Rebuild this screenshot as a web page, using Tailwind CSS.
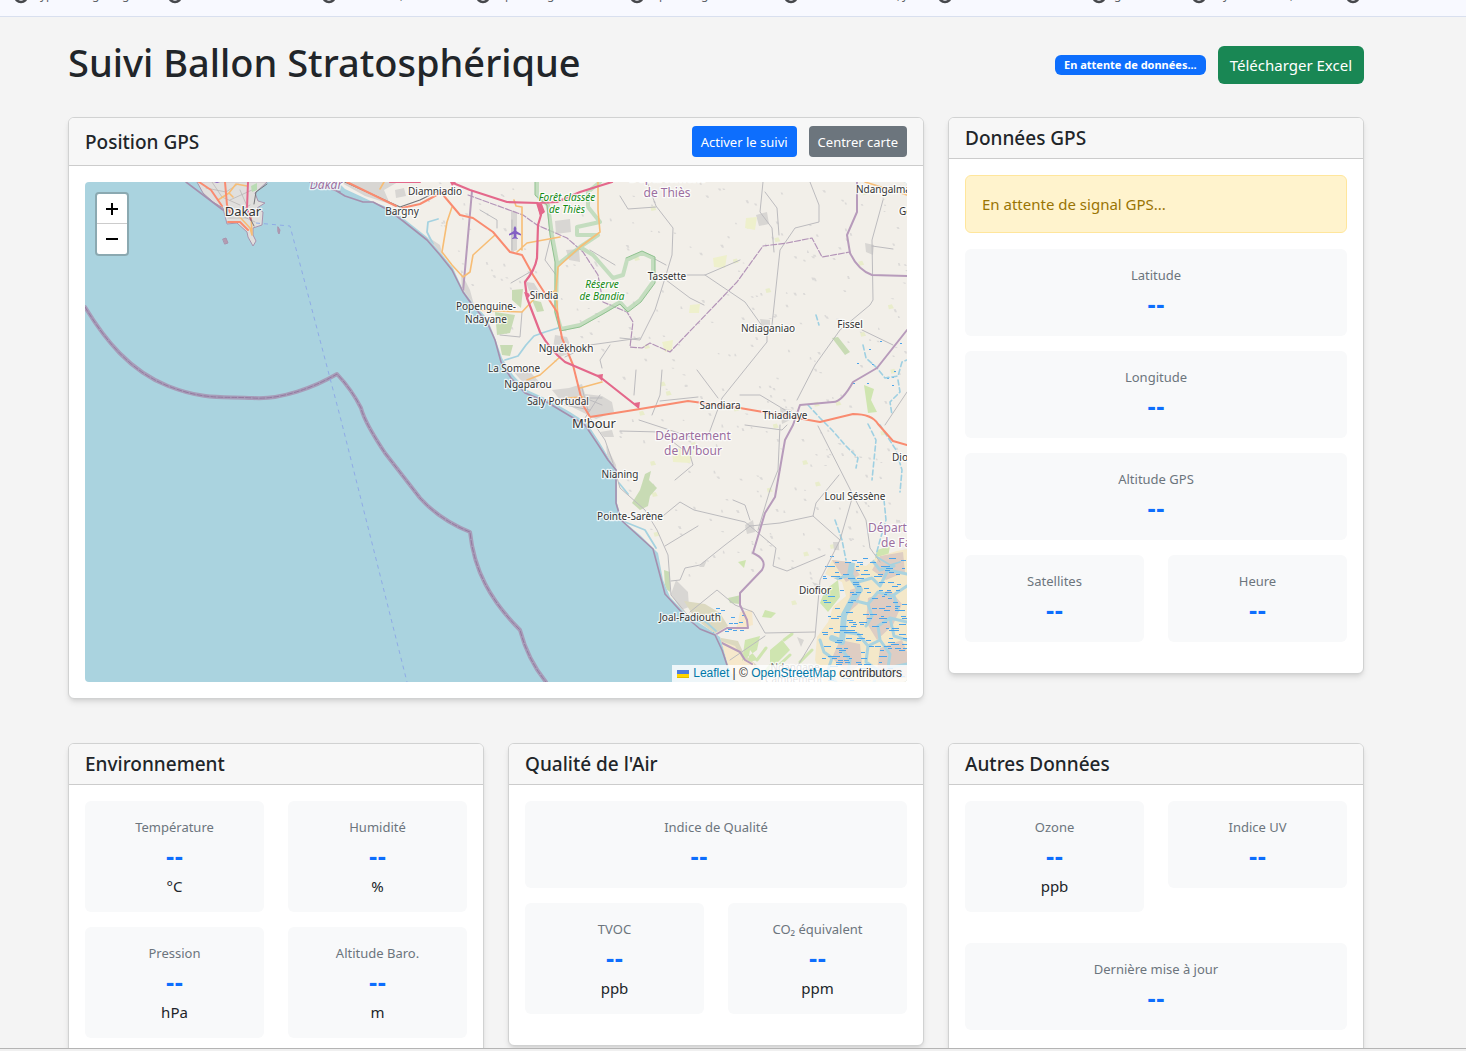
<!DOCTYPE html>
<html lang="fr">
<head>
<meta charset="utf-8">
<meta name="viewport" content="width=device-width, initial-scale=1">
<title>Suivi Ballon Stratosphérique</title>
<script src="https://cdn.jsdelivr.net/npm/@tailwindcss/browser@4"></script>
</head>
<body class="flex h-screen flex-col overflow-hidden bg-[#f4f4f4] font-['Noto_Sans',sans-serif] text-[15px] leading-6 text-[#212529]">

<!-- Bookmarks bar, scrolled almost out of view -->
<div class="flex h-[17px] shrink-0 items-start overflow-hidden border-b border-[#d9e0ef] bg-[#f8f9ff] pl-[13px]" aria-hidden="true">
  <svg class="h-4 w-full" fill="none" stroke="#46484c" stroke-width="2.500">
    <g>
      <circle cx="8" cy="-4" r="6"/><circle cx="162" cy="-4" r="6"/><circle cx="316" cy="-4" r="6"/><circle cx="470" cy="-4" r="6"/><circle cx="624" cy="-4" r="6"/><circle cx="778" cy="-4" r="6"/><circle cx="932" cy="-4" r="6"/><circle cx="1086" cy="-4" r="6"/><circle cx="1186" cy="-4" r="6"/><circle cx="1340" cy="-4" r="6"/>
    </g>
    <g fill="#5f6368" stroke="none" font-size="12">
      <text x="27" y="-1">yp</text><text x="79" y="-1">g</text><text x="109" y="-1">g</text><text x="387" y="-1">,</text><text x="492" y="-1">p</text><text x="534" y="-1">g</text><text x="646" y="-1">p</text><text x="688" y="-1">g</text><text x="884" y="-1">,</text><text x="889" y="-1">y</text><text x="1101" y="-1">g</text><text x="1210" y="-1">y</text><text x="1277" y="-1">,</text>
    </g>
  </svg>
</div>

<div class="min-h-0 flex-1 overflow-hidden pr-[34px]">
<main class="mx-auto max-w-[1320px] px-3">
  <header class="flex items-center justify-between pt-6">
    <h1 class="pb-1.5 text-[38px] leading-[42px] font-medium">Suivi Ballon Stratosphérique</h1>
    <div class="flex items-center gap-3">
      <span class="rounded-md bg-[#0d6efd] px-[9px] text-[11px] leading-5 font-bold text-white">En attente de données...</span>
      <button type="button" class="h-[38px] rounded-md bg-[#198754] px-3 text-[15px] text-white">Télécharger Excel</button>
    </div>
  </header>

  <div class="mt-7 grid grid-cols-3 items-start gap-6">
    <section class="col-span-2 overflow-hidden rounded-md border border-[#d1d2d2] bg-white shadow-md">
      <div class="flex items-center justify-between border-b border-[#cccccc] bg-[#f7f7f7] px-4 py-2">
        <h2 class="text-[19px] leading-6 font-medium">Position GPS</h2>
        <div class="flex gap-3">
          <button type="button" class="h-[31px] rounded bg-[#0d6efd] px-[9px] text-[13px] text-white">Activer le suivi</button>
          <button type="button" class="h-[31px] rounded bg-[#6c757d] px-[9px] text-[13px] text-white">Centrer carte</button>
        </div>
      </div>
      <div class="p-4">
        <div class="relative h-[500px] overflow-hidden rounded bg-[#aad3df]">
          <svg class="h-full w-full" viewBox="85 182 822 500" preserveAspectRatio="xMidYMid slice" fill="none" stroke-linejoin="round" stroke-linecap="round" role="img" aria-label="Carte de la région de Dakar et M'bour">
            <defs>
              <clipPath id="land"><path d="M338 182 345 189 373 202 390 208 403 218 427 237 440 252 453 268 463 290 473 303 487 318 495 338 502 358 513 375 527 390 547 399 570 412 587 423 600 443 610 460 617 470 617 503 622 520 640 535 658 553 663 580 670 597 687 615 710 630 720 637 723 647 728 665 735 682 907 682 907 182Z"/></clipPath>
              <clipPath id="delta"><path d="M877 557 897 551 907 549V682H823L815 660 817 637 828 622 833 607 846 596 842 582 825 574 832 560 850 562 866 566Z"/></clipPath>
            </defs>
            <!-- Cap-Vert peninsula and islets -->
            <path fill="#e0dfdd" stroke="#a893ad" d="M197 182 203 193 213 202 223 208 227 224 237 223 247 232 248 237 253 246 256 241 253 235 253 228 262 225 263 212 257 208 265 203 258 201 255 193 267 182Z"/>
            <path fill="#b59bb0" stroke="#a893ad" d="M223 239 226 238 228 243 225 244ZM278 227 280 230 279 234 278 232Z"/>
            <path stroke="#b4b2b0" stroke-width=".7" d="M212 182 222 197 240 205M206 188 226 192 238 184M235 214 250 205M230 200 252 190M240 215 255 222M228 211 256 211M228 218 248 218M240 190 247 206"/>
            <!-- Mainland -->
            <g clip-path="url(#land)">
              <path fill="#f2efe9" d="M300 182H907V682H300Z"/>
              <g id="texture"></g>
              <path fill="#d8d6d3" d="M340 182H398L384 190 390 204 365 196ZM395 190 404 188 406 196 396 198ZM511 210 517 212 517 250 511 252ZM555 221 570 219 571 232 556 234ZM526 282 534 283 542 296 531 296ZM555 335 567 337 573 352 560 357 553 348ZM569 388 582 384 585 394 602 396 612 402 614 412 596 419 584 413 562 402 552 390ZM510 368 530 372 545 388 528 388ZM600 432 612 430 614 437 604 437ZM606 445 616 465 617 476 608 462ZM676 580 688 592 689 607 681 610 671 594ZM756 215 767 212 769 224 759 226ZM760 319 770 320 770 328 762 328ZM745 525 753 520 755 532 747 534ZM833 542 839 542 839 550 834 550ZM703 562 707 560 704 567 699 567ZM812 582 821 585 819 592ZM797 637 804 640 801 647ZM428 237 440 245 444 260 455 272 450 270 437 256ZM461 272 470 290 474 305 462 293ZM566 250 579 249 580 262 569 260ZM865 243 874 245 873 255 866 252ZM780 408 792 410 790 420 782 424Z"/>
              <path fill="#c8dbb4" d="M512 290 523 289 521 308 512 300ZM532 300 541 302 544 311 537 312ZM495 312 515 315 510 333 497 335ZM500 345 513 345 510 356 502 355ZM645 474 651 471 649 480 657 488 650 496 648 506 640 510 632 503 640 490ZM832 338 838 337 850 352 845 355ZM664 570 670 572 670 592 665 588ZM728 598 741 595 740 604 730 603Z"/>
              <path fill="#eef0cc" d="M746 218 757 217 755 230 745 228ZM713 258 727 255 725 268 714 267ZM690 305 700 304 699 313 689 313ZM662 342 673 340 672 350 665 352ZM672 448 694 450 690 463 673 462Z"/>
              <path fill="#dcd9c0" d="M684 601 705 604 720 613 728 626 714 634 694 617ZM716 637 738 641 744 654 760 668 761 682H730Z"/>
              <path fill="#f6e8cc" d="M718 640 735 646 742 658 754 663V674H732ZM740 612 752 610 753 625 736 630Z"/>
              <path fill="#cfe5b0" d="M745 640 760 636 757 650 742 661ZM770 650 782 640 790 650 770 670ZM825 590 838 580 840 597 828 612 820 603ZM738 562 746 560 744 568ZM765 610 776 613 771 618 762 617ZM750 650 748 662 758 660ZM864 385 874 389 871 400 877 412 868 413ZM877 550 890 546 887 563 873 567Z"/>
              <path stroke="#cfe5b0" stroke-width="3" d="M757 660 766 648M776 668 790 655M762 676 770 666M784 640 792 634M800 662 812 650"/>
              <!-- Saloum delta -->
              <g clip-path="url(#delta)">
                <path fill="#f4e8c9" d="M810 540H907V682H810Z"/>
                <path fill="#decdc3" d="M830 557 850 562 860 575 846 582ZM880 556 903 552 905 572 886 580 872 570ZM868 598 890 590 902 604 893 625 877 640 866 622ZM840 640 860 644 862 664 848 673 832 658ZM880 648 902 640 907 652V678H876ZM850 590 862 586 858 604 849 612Z"/>
                <g stroke="#aad3df"><path stroke-width="6" d="M853 558 850 575 860 590 852 600 844 615 842 642 832 638"/><path stroke-width="3" d="M850 575 833 580M852 600 868 604 878 592 892 596 907 586M842 632 858 634 868 646 880 640 878 626 890 618 907 622M858 582 872 578 880 586 888 570 907 574M872 560 880 570 894 566M820 640 824 652 832 658 828 670 836 682M868 646 866 662 878 670 874 682M890 618 894 636 907 640M842 650 850 660 848 674M880 640 890 654 888 668 907 664M868 604 872 616 866 626M894 596 898 610"/></g>
              </g>
              <g id="swamp"></g>
              <!-- Intermittent streams -->
              <path stroke="#9fd0e2" stroke-width="1.6" stroke-dasharray="5 3" d="M863 345 866 358 877 368 885 378 898 376 902 362 907 360M898 380 900 392 890 402 892 415M808 405 820 418 832 430 845 445 858 458 856 468M868 424 876 440 874 460 872 480M880 425 896 450 902 470 900 492M835 520 842 540 846 560M884 500 886 520 880 540 876 555M816 315 819 325"/>
              <path stroke="#a5d2e0" stroke-width="1.8" d="M438 219 428 222 427 232 433 244M505 360 518 356 526 345 534 336 545 332 558 328M619 483 628 494M625 522 645 530 656 548M690 616 706 622 716 631M877 557 890 565 900 562"/>
              <!-- Local roads -->
              <path stroke="#bcbbbe" stroke-width="1" d="M647 182 656 206 673 228 672 255 666 275 655 310 640 340 620 338M656 207 628 209 620 196M666 265 653 258M666 280 690 298 704 305M687 275 705 275 740 260M705 275 745 302 765 330M810 182 819 205V222L795 228 780 250 772 325 767 330V342L722 398 708 436M763 182 760 212 772 228 774 252M765 192 777 208 779 235M883 200 872 240 873 300 870 305 840 330 815 365 797 400M872 246 893 249M718 398 697 370M698 397 660 401M740 395 760 395 785 410M662 370 660 395 652 415M639 420 700 440M620 431 660 432 690 455 693 465 675 480M745 425 782 430 787 425M590 418 605 440 612 460 620 488 645 510 657 530 668 555 671 595 690 618M658 520 680 502 694 510 745 522 750 526 780 523 813 516M750 526 725 545 700 565 685 568 680 580 671 581M818 426 853 495 840 540 820 580 815 637 788 682M853 495 866 520 870 548 880 562M840 540 813 516 816 503 839 475M750 526 776 548 773 566 787 571 825 555M665 546 698 526M690 612 717 590 735 605 753 612 765 633 815 632M765 636 730 660M585 398 602 405M565 405 590 410M571 398 602 398M582 388 590 418M600 395 585 418M565 357 590 345 640 338M610 345 600 360 602 368M636 370 634 395M500 335 520 337 522 312M550 240 545 260 556 275M512 220V250M480 210 497 220 497 228M511 283 530 272M590 250 615 265M780 425 778 470 770 490 758 530M733 500 745 505 750 520M862 330 893 345M907 392 885 425"/>
              <path stroke="#77767a" stroke-width="1.3" d="M345 182 400 207 420 200 440 190"/>
              <!-- Administrative limits -->
              <path stroke="#b79bbb" stroke-width="2" d="M472 191 463 292M857 182V212L847 235 850 253Q858 270 872 275L907 276M907 330 877 368 853 382Q842 402 833 402L800 405 793 425 785 440 775 497 765 513 753 553Q768 560 762 570L740 593V605L747 620 748 628 727 628 715 635M716 640 740 652 745 660 752 664"/>
              <path stroke="#b394b8" stroke-width="1.2" stroke-dasharray="6 2" d="M468 195 523 215 537 225 567 238 583 252 598 275 603 302 627 312 633 322 630 347 642 348 650 343 670 352 737 282 763 246 787 243 812 238 822 257 850 252"/>
              <!-- Nature reserves -->
              <path stroke="#b8d8b4" stroke-width="4" stroke-opacity=".8" d="M537 182V195L548 205 552 235 557 262 556 312 561 329 580 325 603 312 620 302 627 310 640 300 653 282V258L642 253 627 260 623 275 613 278 593 255 580 247M598 235 577 235V227L600 222 588 207V192L600 182M598 235 580 247 557 265"/>
              <path stroke="#8fc18f" d="M535 182V195L547 205 550 235 555 262V312L560 331 580 327 603 314 620 304 628 312 641 302 655 283V257L642 251 626 258"/>
              <!-- Secondary and primary roads -->
              <path stroke="#f7bd75" stroke-width="1.6" d="M452 207 447 222 442 252 452 265 463 277 470 272 473 255 495 235M514 200 516 206 522 207V250M517 252 527 243 560 237M598 182V210L600 232 580 247 558 267 556 290 558 318M473 310 522 312 535 298 555 291M527 380 540 375 560 357M580 388 602 382M566 398 583 397M865 182 907 195M384 182 380 189"/>
              <path stroke="#f98b70" stroke-width="2" d="M347 182 396 206M402 208 420 204 446 190M444 196 460 215 473 218 493 232 510 252 522 255 533 275 557 312 562 338 573 365 583 405 590 417 640 409 688 401 740 408 763 412 820 422 853 414Q872 414 878 424L893 441 907 445"/>
              <path stroke="#e4688b" stroke-width="2.2" d="M390 182H420M453 183 470 190 507 202 538 203 557 202 580 192 612 182M538 203 541 215 538 225 537 258Q535 270 525 282L527 298 540 332Q550 350 565 362L600 377 638 407"/>
              <path fill="#e4688b" d="M536 203 542 204 545 212 540 216ZM596 375 603 374 602 381ZM634 403 640 402 639 409ZM450 182H456L452 186ZM524 292 531 294 527 300Z"/>
            </g>
            <!-- Dakar streets -->
            <path stroke="#f7bd75" stroke-width="1.6" d="M218 200 229 193 236 184M229 193 233 197M236 184 247 186M238 215 250 228 252 235M251 215 252 234"/>
            <path stroke="#f98b70" stroke-width="2" d="M199 182 211 190 222 206M225 182 227 205 230 212M228 222 240 222 248 230"/>
            <path stroke="#e4688b" stroke-width="2" d="M248 182 247 208 251 220"/>
            <path stroke="#77767a" d="M267 184 256 192 254 204M250 218 254 226"/>
            <path fill="#b9dcb3" d="M251 186 257 183 257 190 252 192Z"/>
            <!-- Coastal and maritime limits -->
            <path stroke="#a58fae" stroke-width="1.6" d="M186 182 223 210M335 190 345 196 363 202 373 202 390 211 403 221 427 240 440 255 452 270 463 292 473 306 487 322 495 340 501 362 511 378 525 393 545 401 570 416 585 425 599 446 608 460 616 470V503L621 520 653 549 665 594 686 617 700 629 715 635 722 650 727 665M310 182 340 192"/>
            <path stroke="#a79db9" stroke-width="4" d="M85 307C105 340 130 371 168 386S225 396 253 398 315 387 337 374Q352 390 361 408C364 420 375 438 385 453L420 498Q440 520 470 532C474 570 490 600 520 630Q528 660 546 682"/>
            <path stroke="#94789f" stroke-dasharray="5 2" d="M85 307C105 340 130 371 168 386S225 396 253 398 315 387 337 374Q352 390 361 408C364 420 375 438 385 453L420 498Q440 520 470 532C474 570 490 600 520 630Q528 660 546 682"/>
            <path stroke="#8fabe6" stroke-dasharray="4 4" stroke-linecap="butt" d="M256 223 290 226 341 420 407 682"/>
            <!-- Airport -->
            <path fill="#8461c4" d="M515 226 516.300 228V231L521 234V235.500L516.300 234V237L518 238.500V239L515 238.400 512 239V238.500L513.700 237V234L509 235.500V234L513.700 231V228ZM214 182H220L217 183Z"/>
            <!-- Place names -->
            <g text-anchor="middle" font-size="10" fill="#333" stroke="#fff" stroke-opacity=".75" stroke-width="2.500" paint-order="stroke">
              <text x="243" y="216" font-size="13">Dakar</text><text x="594" y="428" font-size="13">M'bour</text>
              <text x="435" y="195">Diamniadio</text><text x="402" y="215">Bargny</text><text x="544" y="299">Sindia</text><text x="486" y="310">Popenguine-</text><text x="486" y="323">Ndayane</text><text x="566" y="352">Nguékhokh</text><text x="514" y="372">La Somone</text><text x="528" y="388">Ngaparou</text><text x="558" y="405">Saly Portudal</text><text x="667" y="280">Tassette</text><text x="768" y="332">Ndiaganiao</text><text x="850" y="328">Fissel</text><text x="720" y="409">Sandiara</text><text x="785" y="419">Thiadiaye</text><text x="620" y="478">Nianing</text><text x="630" y="520">Pointe-Sarène</text><text x="855" y="500">Loul Séssène</text><text x="815" y="594">Diofior</text><text x="690" y="621">Joal-Fadiouth</text><text x="795" y="671" fill="#777">Ndangane</text><text x="794" y="683" fill="#777">Campement</text>
              <text x="856" y="193" text-anchor="start">Ndangalma</text><text x="899" y="215" text-anchor="start">Gossas</text><text x="892" y="461" text-anchor="start">Dioui</text>
              <g fill="#148a14" font-style="italic"><text x="567" y="201">Forêt classée</text><text x="567" y="213">de Thiès</text><text x="602" y="288">Réserve</text><text x="602" y="300">de Bandia</text></g>
              <g fill="#9c6fa0" font-size="12"><text x="667" y="182">Département</text><text x="667" y="197">de Thiès</text><text x="693" y="440">Département</text><text x="693" y="455">de M'bour</text><text x="868" y="532" text-anchor="start">Département</text><text x="881" y="547" text-anchor="start">de Fatick</text><text x="326" y="189" font-style="italic">Dakar</text></g>
            </g>
          </svg>

          <div class="absolute top-[10px] left-[10px] flex w-[34px] flex-col rounded border-2 border-[#8ba9b1] bg-white text-black">
            <button type="button" aria-label="Zoom avant" class="flex h-[30px] items-center justify-center border-b border-[#cccccc]"><svg class="h-[12px] w-[12px]" viewBox="0 0 12 12" stroke="currentColor" stroke-width="2"><path d="M0 6H12M6 0V12"/></svg></button>
            <button type="button" aria-label="Zoom arrière" class="flex h-[30px] items-center justify-center"><svg class="h-[12px] w-[12px]" viewBox="0 0 12 12" stroke="currentColor" stroke-width="2"><path d="M0 6H12"/></svg></button>
          </div>

          <div class="absolute right-0 bottom-0 flex items-center bg-white/80 px-[5px] font-['Liberation_Sans',Arial,sans-serif] text-xs leading-[17px] whitespace-pre text-[#333333]"><a href="#" class="flex items-center gap-1 text-[#0078a8]"><svg class="h-2 w-3" viewBox="0 0 12 8"><path fill="#4c7be1" d="M0 0H12V4H0Z"/><path fill="#ffd500" d="M0 4H12V7H0Z"/><path fill="#e0bc00" d="M0 7H12V8H0Z"/></svg>Leaflet</a> | © <a href="#" class="text-[#0078a8]">OpenStreetMap</a> contributors</div>
        </div>
      </div>
    </section>

    <section class="overflow-hidden rounded-md border border-[#d1d2d2] bg-white shadow-md">
      <h2 class="border-b border-[#cccccc] bg-[#f7f7f7] px-4 py-2 text-[19px] leading-6 font-medium">Données GPS</h2>
      <div class="p-4">
        <div role="alert" class="mb-4 rounded-md border border-[#ffe69c] bg-[#fff3cd] p-4 text-[#997404]">En attente de signal GPS...</div>
        <dl class="mb-[15px] grid grid-cols-2 gap-x-6 gap-y-[15px] text-center">
          <div class="col-span-2 rounded-md bg-[#f8f9fa] px-4 pt-4 pb-3.5"><dt class="text-[13px] leading-[21px] text-[#6c757d]">Latitude</dt><dd class="font-['Liberation_Sans',Arial,sans-serif] text-[26px] leading-9 font-bold text-[#0d6efd]">--</dd></div>
          <div class="col-span-2 rounded-md bg-[#f8f9fa] px-4 pt-4 pb-3.5"><dt class="text-[13px] leading-[21px] text-[#6c757d]">Longitude</dt><dd class="font-['Liberation_Sans',Arial,sans-serif] text-[26px] leading-9 font-bold text-[#0d6efd]">--</dd></div>
          <div class="col-span-2 rounded-md bg-[#f8f9fa] px-4 pt-4 pb-3.5"><dt class="text-[13px] leading-[21px] text-[#6c757d]">Altitude GPS</dt><dd class="font-['Liberation_Sans',Arial,sans-serif] text-[26px] leading-9 font-bold text-[#0d6efd]">--</dd></div>
          <div class="rounded-md bg-[#f8f9fa] px-4 pt-4 pb-3.5"><dt class="text-[13px] leading-[21px] text-[#6c757d]">Satellites</dt><dd class="font-['Liberation_Sans',Arial,sans-serif] text-[26px] leading-9 font-bold text-[#0d6efd]">--</dd></div>
          <div class="rounded-md bg-[#f8f9fa] px-4 pt-4 pb-3.5"><dt class="text-[13px] leading-[21px] text-[#6c757d]">Heure</dt><dd class="font-['Liberation_Sans',Arial,sans-serif] text-[26px] leading-9 font-bold text-[#0d6efd]">--</dd></div>
        </dl>
      </div>
    </section>
  </div>

  <div class="mt-11 grid grid-cols-3 items-start gap-6">
    <section class="overflow-hidden rounded-md border border-[#d1d2d2] bg-white shadow-md">
      <h2 class="border-b border-[#cccccc] bg-[#f7f7f7] px-4 py-2 text-[19px] leading-6 font-medium">Environnement</h2>
      <dl class="mb-[15px] grid grid-cols-2 items-start gap-x-6 gap-y-[15px] p-4 text-center">
        <div class="rounded-md bg-[#f8f9fa] px-4 pt-4 pb-3.5"><dt class="text-[13px] leading-[21px] text-[#6c757d]">Température</dt><dd class="font-['Liberation_Sans',Arial,sans-serif] text-[26px] leading-9 font-bold text-[#0d6efd]">--</dd><dd>°C</dd></div>
        <div class="rounded-md bg-[#f8f9fa] px-4 pt-4 pb-3.5"><dt class="text-[13px] leading-[21px] text-[#6c757d]">Humidité</dt><dd class="font-['Liberation_Sans',Arial,sans-serif] text-[26px] leading-9 font-bold text-[#0d6efd]">--</dd><dd>%</dd></div>
        <div class="rounded-md bg-[#f8f9fa] px-4 pt-4 pb-3.5"><dt class="text-[13px] leading-[21px] text-[#6c757d]">Pression</dt><dd class="font-['Liberation_Sans',Arial,sans-serif] text-[26px] leading-9 font-bold text-[#0d6efd]">--</dd><dd>hPa</dd></div>
        <div class="rounded-md bg-[#f8f9fa] px-4 pt-4 pb-3.5"><dt class="text-[13px] leading-[21px] text-[#6c757d]">Altitude Baro.</dt><dd class="font-['Liberation_Sans',Arial,sans-serif] text-[26px] leading-9 font-bold text-[#0d6efd]">--</dd><dd>m</dd></div>
      </dl>
    </section>

    <section class="overflow-hidden rounded-md border border-[#d1d2d2] bg-white shadow-md">
      <h2 class="border-b border-[#cccccc] bg-[#f7f7f7] px-4 py-2 text-[19px] leading-6 font-medium">Qualité de l'Air</h2>
      <dl class="mb-[15px] grid grid-cols-2 items-start gap-x-6 gap-y-[15px] p-4 text-center">
        <div class="col-span-2 rounded-md bg-[#f8f9fa] px-4 pt-4 pb-3.5"><dt class="text-[13px] leading-[21px] text-[#6c757d]">Indice de Qualité</dt><dd class="pr-[34px] font-['Liberation_Sans',Arial,sans-serif] text-[26px] leading-9 font-bold text-[#0d6efd]">--</dd></div>
        <div class="rounded-md bg-[#f8f9fa] px-4 pt-4 pb-3.5"><dt class="text-[13px] leading-[21px] text-[#6c757d]">TVOC</dt><dd class="font-['Liberation_Sans',Arial,sans-serif] text-[26px] leading-9 font-bold text-[#0d6efd]">--</dd><dd>ppb</dd></div>
        <div class="rounded-md bg-[#f8f9fa] px-4 pt-4 pb-3.5"><dt class="text-[13px] leading-[21px] text-[#6c757d]">CO₂ équivalent</dt><dd class="font-['Liberation_Sans',Arial,sans-serif] text-[26px] leading-9 font-bold text-[#0d6efd]">--</dd><dd>ppm</dd></div>
      </dl>
    </section>

    <section class="overflow-hidden rounded-md border border-[#d1d2d2] bg-white shadow-md">
      <h2 class="border-b border-[#cccccc] bg-[#f7f7f7] px-4 py-2 text-[19px] leading-6 font-medium">Autres Données</h2>
      <dl class="mb-[15px] grid grid-cols-2 items-start gap-x-6 gap-y-[15px] p-4 text-center">
        <div class="rounded-md bg-[#f8f9fa] px-4 pt-4 pb-3.5"><dt class="text-[13px] leading-[21px] text-[#6c757d]">Ozone</dt><dd class="font-['Liberation_Sans',Arial,sans-serif] text-[26px] leading-9 font-bold text-[#0d6efd]">--</dd><dd>ppb</dd></div>
        <div class="rounded-md bg-[#f8f9fa] px-4 pt-4 pb-3.5"><dt class="text-[13px] leading-[21px] text-[#6c757d]">Indice UV</dt><dd class="font-['Liberation_Sans',Arial,sans-serif] text-[26px] leading-9 font-bold text-[#0d6efd]">--</dd></div>
        <div class="col-span-2 mt-4 rounded-md bg-[#f8f9fa] px-4 pt-4 pb-3.5"><dt class="text-[13px] leading-[21px] text-[#6c757d]">Dernière mise à jour</dt><dd class="font-['Liberation_Sans',Arial,sans-serif] text-[26px] leading-9 font-bold text-[#0d6efd]">--</dd></div>
      </dl>
    </section>
  </div>
</main>
</div>
<div class="h-[3px] shrink-0 border-t border-[#b4b4b4] bg-[#f0f0f0]"></div>

<script>
  // Scatter hamlets, fields and marsh strokes over the land with a seeded generator.
  let seed = 7;
  const rnd = () => (seed = (seed * 16807) % 2147483647) / 2147483647;
  let hamlets = '', fields = '', marsh = '';
  for (let i = 0; i < 420; i++) hamlets += `M${(400 + rnd() * 507).toFixed(1)} ${(182 + rnd() * 400).toFixed(1)}h${(1 + rnd() * 2).toFixed(1)}l1 ${(1 + rnd() * 2).toFixed(1)}h-2z`;
  for (let i = 0; i < 40; i++) fields += `M${(620 + rnd() * 280).toFixed(1)} ${(190 + rnd() * 470).toFixed(1)}l4 -1 2 4 -5 1z`;
  for (let i = 0; i < 190; i++) marsh += `M${Math.round(822 + rnd() * 82)} ${Math.round(278 + rnd() * 62) * 2}h${Math.round(3 + rnd() * 4)}`;
  for (let i = 0; i < 18; i++) marsh += `M${Math.round(694 + rnd() * 50)} ${Math.round(604 + rnd() * 28)}h4`;
  for (let i = 0; i < 12; i++) marsh += `M${Math.round(845 + rnd() * 55)} ${Math.round(335 + rnd() * 70)}h2`;
  document.getElementById('texture').innerHTML = `<path fill="#e9edcb" d="${fields}"/><path fill="#dcdad8" d="${hamlets}"/>`;
  document.getElementById('swamp').innerHTML = `<path stroke="#4aa3ea" stroke-width="1" stroke-linecap="butt" transform="translate(0 .5)" d="${marsh}"/>`;
</script>
</body>
</html>
